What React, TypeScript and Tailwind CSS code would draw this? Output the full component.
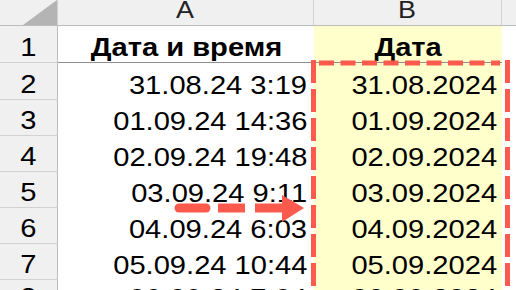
const rows = [
  { n: "2", a: "31.08.24 3:19", b: "31.08.2024", h: "h-[37px]", pb: "pb-[2px]" },
  { n: "3", a: "01.09.24 14:36", b: "01.09.2024", h: "h-[36px]", pb: "pb-[2px]" },
  { n: "4", a: "02.09.24 19:48", b: "02.09.2024", h: "h-[36px]", pb: "pb-[2px]" },
  { n: "5", a: "03.09.24 9:11", b: "03.09.2024", h: "h-[36px]", pb: "pb-[2px]" },
  { n: "6", a: "04.09.24 6:03", b: "04.09.2024", h: "h-[36px]", pb: "pb-[2px]" },
  { n: "7", a: "05.09.24 10:44", b: "05.09.2024", h: "h-[36px]", pb: "pb-[2px]" },
  { n: "8", a: "06.09.24 7:04", b: "06.09.2024", h: "h-[36px]", pb: "pb-[5px]" },
];

function Overlay() {
  const red = "#fd5a4e";
  return (
    <svg
      className="absolute left-0 top-0 pointer-events-none"
      width="516"
      height="290"
      viewBox="0 0 516 290"
    >
      {/* dashed frame around column B */}
      <line x1="319" y1="63" x2="500" y2="63" stroke={red} strokeWidth="5" strokeDasharray="15 6.5" />
      <line x1="313.5" y1="60" x2="313.5" y2="300" stroke={red} strokeWidth="5" strokeDasharray="23 6" />
      <line x1="507.5" y1="60" x2="507.5" y2="300" stroke={red} strokeWidth="5" strokeDasharray="23 6" />
      {/* arrow */}
      <line x1="179" y1="208" x2="206" y2="208" stroke={red} strokeWidth="9" strokeLinecap="round" />
      <line x1="218" y1="208" x2="245" y2="208" stroke={red} strokeWidth="9" />
      <line x1="255" y1="208" x2="285" y2="208" stroke={red} strokeWidth="9" />
      <polygon points="282,195 304,208 282,222" fill={red} />
    </svg>
  );
}

export default function App() {
  return (
    <div className="relative w-[516px] h-[290px] overflow-hidden bg-white text-black font-['Liberation_Sans',Arial,sans-serif]">
      {/* column headers */}
      <div className="flex h-[26px] bg-[#f0f0f0] border-b border-[#bcbcbc] text-[24px] leading-[24px] text-[#222]">
        <div className="relative w-[58px] border-r border-[#d2d2d2]">
          <svg className="absolute left-0 top-0" width="57" height="25">
            <polygon points="23,25 57,25 57,0" fill="#b4b4b4" />
          </svg>
        </div>
        <div className="w-[256px] border-r border-[#d2d2d2] flex justify-center items-start -mt-[2px]">
          <span className="inline-block scale-x-[1.12]">A</span>
        </div>
        <div className="w-[188px] border-r border-[#d2d2d2] flex justify-center items-start -mt-[2px]">
          <span className="inline-block scale-x-[1.12]">B</span>
        </div>
        <div className="flex-1" />
      </div>

      {/* row 1 */}
      <div className="flex h-[37px] text-[26px] leading-[26px]">
        <div className="w-[58px] bg-[#f0f0f0] border-r border-b border-r-[#bcbcbc] border-b-[#d2d2d2] flex justify-center items-end pb-[2px]">
          <span className="inline-block scale-x-[1.12]">1</span>
        </div>
        <div className="w-[256px] border-b border-[#8f8f8f] flex justify-center items-end pb-[2px] font-bold">
          <span className="inline-block scale-x-[1.12]">Дата и время</span>
        </div>
        <div className="w-[188px] bg-[#ffffcc] border-b border-[#8f8f8f] flex justify-center items-end pb-[2px] font-bold">
          <span className="inline-block scale-x-[1.12]">Дата</span>
        </div>
        <div className="flex-1" />
      </div>

      {rows.map((r) => (
        <div key={r.n} className={`flex ${r.h} text-[26px] leading-[26px]`}>
          <div className={`w-[58px] bg-[#f0f0f0] border-r border-b border-r-[#bcbcbc] border-b-[#d2d2d2] flex justify-center items-end ${r.pb}`}>
            <span className="inline-block scale-x-[1.12]">{r.n}</span>
          </div>
          <div className={`w-[256px] flex justify-end items-end pr-[7px] ${r.pb}`}>
            <span className="inline-block origin-right scale-x-[1.12]">{r.a}</span>
          </div>
          <div className={`w-[188px] bg-[#ffffcc] flex justify-end items-end pr-[5px] ${r.pb}`}>
            <span className="inline-block origin-right scale-x-[1.12]">{r.b}</span>
          </div>
          <div className="flex-1" />
        </div>
      ))}

      <Overlay />
    </div>
  );
}
